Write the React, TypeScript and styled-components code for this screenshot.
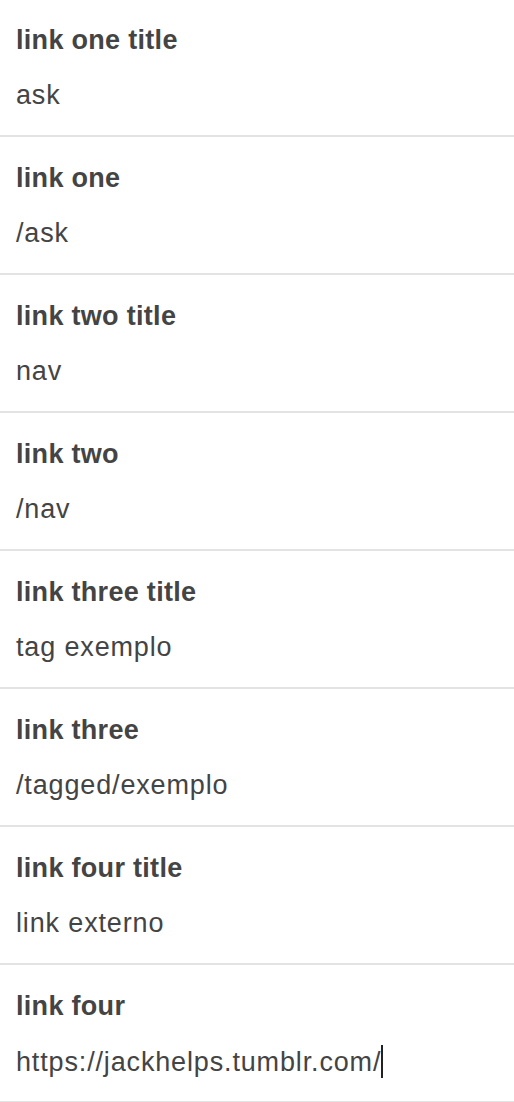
import React from "react";
import styled, { createGlobalStyle } from "styled-components";

const Global = createGlobalStyle`
  html, body { margin: 0; padding: 0; background: #fff; }
  body { font-family: "Liberation Sans", Arial, sans-serif; -webkit-font-smoothing: antialiased; }
`;

const List = styled.div`
  display: flex;
  flex-direction: column;
  width: 514px;
`;

const Field = styled.div`
  display: flex;
  flex-direction: column;
  gap: 23px;
  padding: 25px 16px 0 16px;
  height: 138px;
  box-sizing: border-box;
  border-bottom: 2px solid #e3e3e3;

  &:first-child {
    height: 137px;
    padding-top: 24px;
  }
`;

const Label = styled.div`
  font-size: 27px;
  line-height: 32px;
  font-weight: 700;
  color: #444;
  letter-spacing: 0.3px;
`;

const Value = styled.div`
  font-size: 27px;
  line-height: 32px;
  color: #444;
  letter-spacing: 0.85px;
  display: flex;
  align-items: center;
`;

const Caret = styled.span`
  display: inline-block;
  width: 2px;
  height: 33px;
  background: #222;
`;

const fields = [
  ["link one title", "ask"],
  ["link one", "/ask"],
  ["link two title", "nav"],
  ["link two", "/nav"],
  ["link three title", "tag exemplo"],
  ["link three", "/tagged/exemplo"],
  ["link four title", "link externo"],
  ["link four", "https://jackhelps.tumblr.com/"],
];

export default function App() {
  return (
    <>
      <Global />
      <List>
        {fields.map(([label, value], i) => (
          <Field key={label}>
            <Label>{label}</Label>
            <Value>
              {value}
              {i === fields.length - 1 && <Caret />}
            </Value>
          </Field>
        ))}
      </List>
    </>
  );
}
